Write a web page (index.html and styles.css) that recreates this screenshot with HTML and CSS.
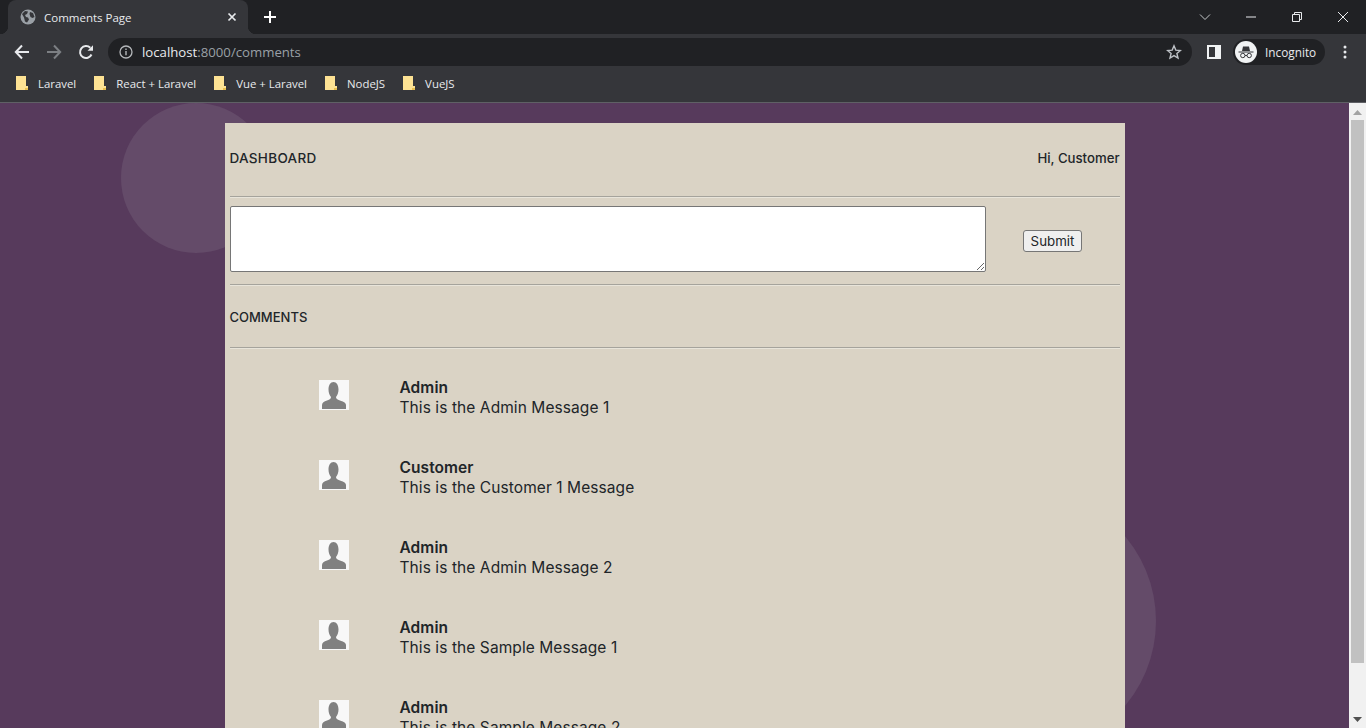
FILE: index.html
```html
<!DOCTYPE html>
<html>
	<head>
		<meta charset="utf-8">
		<title>Comments Page</title>
		<link rel="stylesheet" href="styles.css">
	</head>
	<body>
		<div class="chrome">
			<div class="tabstrip">
				<div class="tab">
					<svg class="globe" width="16" height="16" viewBox="0 0 16 16"><circle cx="8" cy="8" r="7.500" fill="#9aa0a6"/><path d="M2 5l3-3 3 .5-1 2.500-2 1 1 2 2 .5 1 2-2 3-2-1-1-4zM10 3l3 1 1.500 4-2 1-2-1-1-3z" fill="#35363a"/></svg>
					<span class="tab-title">Comments Page</span>
					<svg class="tab-close" width="10" height="10" viewBox="0 0 10 10"><path d="M1.500 1.500l7 7M8.500 1.500l-7 7" stroke="#e8eaed" stroke-width="1.700"/></svg>
				</div>
				<svg class="newtab" width="14" height="14" viewBox="0 0 14 14"><path d="M7 1v12M1 7h12" stroke="#fff" stroke-width="2"/></svg>
				<div class="winbtns">
					<svg class="win-chevron" width="12" height="8" viewBox="0 0 12 8"><path d="M1 1.500l5 5 5-5" fill="none" stroke="#c4c7c9"/></svg>
					<svg class="win-min" width="12" height="2" viewBox="0 0 12 2"><path d="M1 1h10" stroke="#e8eaed"/></svg>
					<svg class="win-max" width="12" height="12" viewBox="0 0 12 12"><path d="M1.500 3.500h7v7h-7zM3.500 3.500v-2h7v7h-2" fill="none" stroke="#e8eaed"/></svg>
					<svg class="win-x" width="12" height="12" viewBox="0 0 12 12"><path d="M1 1l10 10M11 1L1 11" stroke="#e8eaed"/></svg>
				</div>
			</div>
			<div class="toolbar">
				<svg class="nav-icon" width="16" height="16" viewBox="0 0 16 16"><path d="M15 8H2M8 1.500L1.800 8 8 14.500" fill="none" stroke="#e8eaed" stroke-width="2"/></svg>
				<svg class="nav-icon" width="16" height="16" viewBox="0 0 16 16"><path d="M1 8h13M8 1.500L14.200 8 8 14.500" fill="none" stroke="#7c7f83" stroke-width="2"/></svg>
				<svg class="nav-icon" width="16" height="16" viewBox="0 0 16 16"><path d="M13.500 10.500A6 6 0 1 1 12.300 3.800" fill="none" stroke="#e8eaed" stroke-width="2"/><path d="M9.500 6.800H15V1.300z" fill="#e8eaed"/></svg>
				<div class="omnibox">
					<svg width="14" height="14" viewBox="0 0 14 14"><circle cx="7" cy="7" r="6" fill="none" stroke="#b5b8bb" stroke-width="1.300"/><path d="M7 6v4.200M7 3.600v1.400" stroke="#b5b8bb" stroke-width="1.400"/></svg>
					<span class="url"><span class="url-host">localhost</span>:8000/comments</span>
					<svg class="star" width="16" height="16" viewBox="0 0 16 16"><path d="M8 1.800l1.800 4.300 4.600.4-3.500 3 1.100 4.500L8 11.600 4 14l1.100-4.500-3.500-3 4.600-.4z" fill="none" stroke="#bdc1c6" stroke-width="1.400"/></svg>
				</div>
				<svg class="sidepanel" width="14" height="14" viewBox="0 0 14 14"><path d="M0 0h14v14H0z" fill="#f1f3f4"/><path d="M2 2h6v10H2z" fill="#35363a"/></svg>
				<div class="profile">
					<svg width="22" height="22" viewBox="0 0 22 22"><circle cx="11" cy="11" r="11" fill="#f1f3f4"/><path d="M3.500 10.500h15v1h-15zM7 10l1-4.500h6l1 4.500z" fill="#35363a"/><circle cx="7.800" cy="14.500" r="2.200" fill="none" stroke="#35363a"/><circle cx="14.200" cy="14.500" r="2.200" fill="none" stroke="#35363a"/><path d="M10 14.500h2" stroke="#35363a"/></svg>
					<span>Incognito</span>
				</div>
				<svg class="kebab" width="4" height="14" viewBox="0 0 4 14"><circle cx="2" cy="2" r="1.500" fill="#e8eaed"/><circle cx="2" cy="7" r="1.500" fill="#e8eaed"/><circle cx="2" cy="12" r="1.500" fill="#e8eaed"/></svg>
			</div>
			<div class="bookmarks">
				<div class="bookmark"><svg width="12" height="14" viewBox="0 0 12 14"><path d="M0 0h10v10h2v4H0z" fill="#fde293"/><path d="M9 12h3v2H9z" fill="#e9c04f"/></svg>Laravel</div>
				<div class="bookmark"><svg width="12" height="14" viewBox="0 0 12 14"><path d="M0 0h10v10h2v4H0z" fill="#fde293"/><path d="M9 12h3v2H9z" fill="#e9c04f"/></svg>React + Laravel</div>
				<div class="bookmark"><svg width="12" height="14" viewBox="0 0 12 14"><path d="M0 0h10v10h2v4H0z" fill="#fde293"/><path d="M9 12h3v2H9z" fill="#e9c04f"/></svg>Vue + Laravel</div>
				<div class="bookmark"><svg width="12" height="14" viewBox="0 0 12 14"><path d="M0 0h10v10h2v4H0z" fill="#fde293"/><path d="M9 12h3v2H9z" fill="#e9c04f"/></svg>NodeJS</div>
				<div class="bookmark"><svg width="12" height="14" viewBox="0 0 12 14"><path d="M0 0h10v10h2v4H0z" fill="#fde293"/><path d="M9 12h3v2H9z" fill="#e9c04f"/></svg>VueJS</div>
			</div>
		</div>
		<div class="viewport">
			<div class="page">
				<div class="circle circle1"></div>
				<div class="circle circle2"></div>
				<div class="card">
					<div class="card-head">
						<span class="head-title">DASHBOARD</span>
						<span class="head-user">Hi, Customer</span>
					</div>
					<hr>
					<div class="comment-form">
						<textarea class="comment-box"></textarea>
						<div class="submit-wrap"><button class="submit-btn">Submit</button></div>
					</div>
					<hr>
					<div class="section-title">COMMENTS</div>
					<hr>
					<div class="comments">
						<div class="comment">
							<svg class="avatar" viewBox="0 0 30 30"><path d="M0 0h30v30H0z" fill="#f8f8f8"/><path d="M3 29v-4c0-2.500 2-3.500 5-4.500 3-1 4-2 4-3.500-1.500-2-2.500-4-2.500-7.500C9.500 5 11.500 2 14.500 2s5 3 5 7.500c0 3.500-1 5.500-2.500 7.500 0 1.500 1 2.500 4 3.500 3 1 6 2 6 4.500v4z" fill="#808080"/></svg>
							<div class="comment-text"><div class="comment-name">Admin</div><div>This is the Admin Message 1</div></div>
						</div>
						<div class="comment">
							<svg class="avatar" viewBox="0 0 30 30"><path d="M0 0h30v30H0z" fill="#f8f8f8"/><path d="M3 29v-4c0-2.500 2-3.500 5-4.500 3-1 4-2 4-3.500-1.500-2-2.500-4-2.500-7.500C9.500 5 11.500 2 14.500 2s5 3 5 7.500c0 3.500-1 5.500-2.500 7.500 0 1.500 1 2.500 4 3.500 3 1 6 2 6 4.500v4z" fill="#808080"/></svg>
							<div class="comment-text"><div class="comment-name">Customer</div><div>This is the Customer 1 Message</div></div>
						</div>
						<div class="comment">
							<svg class="avatar" viewBox="0 0 30 30"><path d="M0 0h30v30H0z" fill="#f8f8f8"/><path d="M3 29v-4c0-2.500 2-3.500 5-4.500 3-1 4-2 4-3.500-1.500-2-2.500-4-2.500-7.500C9.500 5 11.500 2 14.500 2s5 3 5 7.500c0 3.500-1 5.500-2.500 7.500 0 1.500 1 2.500 4 3.500 3 1 6 2 6 4.500v4z" fill="#808080"/></svg>
							<div class="comment-text"><div class="comment-name">Admin</div><div>This is the Admin Message 2</div></div>
						</div>
						<div class="comment">
							<svg class="avatar" viewBox="0 0 30 30"><path d="M0 0h30v30H0z" fill="#f8f8f8"/><path d="M3 29v-4c0-2.500 2-3.500 5-4.500 3-1 4-2 4-3.500-1.500-2-2.500-4-2.500-7.500C9.500 5 11.500 2 14.500 2s5 3 5 7.500c0 3.500-1 5.500-2.500 7.500 0 1.500 1 2.500 4 3.500 3 1 6 2 6 4.500v4z" fill="#808080"/></svg>
							<div class="comment-text"><div class="comment-name">Admin</div><div>This is the Sample Message 1</div></div>
						</div>
						<div class="comment">
							<svg class="avatar" viewBox="0 0 30 30"><path d="M0 0h30v30H0z" fill="#f8f8f8"/><path d="M3 29v-4c0-2.500 2-3.500 5-4.500 3-1 4-2 4-3.500-1.500-2-2.500-4-2.500-7.500C9.500 5 11.500 2 14.500 2s5 3 5 7.500c0 3.500-1 5.500-2.500 7.500 0 1.500 1 2.500 4 3.500 3 1 6 2 6 4.500v4z" fill="#808080"/></svg>
							<div class="comment-text"><div class="comment-name">Admin</div><div>This is the Sample Message 2</div></div>
						</div>
					</div>
				</div>
			</div>
			<div class="scrollbar">
				<svg class="scroll-up" width="9" height="5" viewBox="0 0 9 5"><path d="M4.500 0L9 5H0z" fill="#a3a3a3"/></svg>
				<div class="scroll-thumb"></div>
				<svg class="scroll-down" width="9" height="5" viewBox="0 0 9 5"><path d="M0 0h9L4.500 5z" fill="#505050"/></svg>
			</div>
		</div>
	</body>
</html>
```
FILE: styles.css
```css
*{
	margin:0;
	padding:0;
	box-sizing:border-box;
}
html,body{
	height:100%;
	overflow:hidden;
}
body{
	display:flex;
	flex-direction:column;
	font-family:"Open Sans","Liberation Sans",sans-serif;
}
.chrome{
	flex:none;
	height:103px;
	background:#35363a;
	border-bottom:1px solid #5f6065;
	color:#e8eaed;
}
.tabstrip{
	display:flex;
	align-items:center;
	height:34px;
	background:#202124;
	padding-left:8px;
}
.tab{
	position:relative;
	display:flex;
	align-items:center;
	width:240px;
	height:34px;
	padding:0 11px 0 12px;
	background:#35363a;
	border-radius:8px 8px 0 0;
}
.tab:before,.tab:after{
	content:"";
	position:absolute;
	bottom:0;
	width:8px;
	height:8px;
}
.tab:before{
	left:-8px;
	background:radial-gradient(circle at 0 0,#202124 8px,#35363a 8.500px);
}
.tab:after{
	right:-8px;
	background:radial-gradient(circle at 100% 0,#202124 8px,#35363a 8.500px);
}
.tab-title{
	flex:1;
	margin-left:8px;
	font-size:11.500px;
}
.newtab{
	margin-left:15px;
}
.winbtns{
	display:flex;
	align-items:center;
	margin-left:auto;
	padding-right:17px;
}
.win-chevron,.win-min,.win-max{
	margin-right:34px;
}
.toolbar{
	display:flex;
	align-items:center;
	height:36px;
	padding-left:14px;
}
.nav-icon{
	margin-right:16px;
}
.omnibox{
	display:flex;
	align-items:center;
	width:1084px;
	height:28px;
	margin-left:-2px;
	padding:0 10px 0 11px;
	background:#202124;
	border-radius:14px;
}
.url{
	flex:1;
	margin-left:9px;
	font-size:13.200px;
	color:#9aa0a6;
}
.url-host{
	color:#e8eaed;
}
.sidepanel{
	margin-left:15px;
}
.profile{
	display:flex;
	align-items:center;
	gap:8px;
	width:92px;
	height:26px;
	margin-left:12px;
	padding-left:2px;
	background:#202124;
	border-radius:13px;
	font-size:11.800px;
}
.kebab{
	margin-left:18px;
}
.bookmarks{
	display:flex;
	align-items:center;
	height:32px;
	padding:0 0 6px 16px;
}
.bookmark{
	display:flex;
	align-items:center;
	gap:10px;
	margin-right:18px;
	font-size:11.400px;
}
.viewport{
	flex:1;
	display:flex;
	min-height:0;
}
.page{
	position:relative;
	flex:1;
	overflow:hidden;
	background:#573a5c;
	padding-top:20px;
}
.circle{
	position:absolute;
	border-radius:50%;
	background:#644b69;
}
.circle1{
	left:121px;
	top:0;
	width:150px;
	height:150px;
}
.circle2{
	left:892px;
	top:386px;
	width:264px;
	height:264px;
}
.card{
	position:relative;
	width:900px;
	margin:0 auto;
	padding:0 5px;
	background:#dad3c5;
	font-family:Inter,sans-serif;
	color:#212529;
}
.card-head{
	display:flex;
	justify-content:space-between;
	align-items:center;
	height:73px;
	padding-bottom:3px;
	font-weight:500;
}
.head-title{
	font-size:13.500px;
	letter-spacing:.3px;
}
.head-user{
	font-size:13.200px;
}
hr{
	border:none;
	border-top:1px solid #a5a39c;
	border-bottom:1px solid #e8e4da;
}
.comment-form{
	display:flex;
	padding:8px 0 12px;
}
.comment-box{
	width:756px;
	height:66px;
	background:#fff;
	border:1px solid #767676;
	border-radius:2px;
}
.submit-wrap{
	flex:1;
	display:flex;
	align-items:center;
	justify-content:center;
	padding-top:4px;
}
.submit-btn{
	width:59px;
	height:22px;
	background:#efefef;
	border:1px solid #767676;
	border-radius:3px;
	font-family:Inter,sans-serif;
	font-size:13.300px;
	color:#212529;
}
.section-title{
	display:flex;
	align-items:center;
	height:61px;
	font-size:13px;
	font-weight:500;
}
.comments{
	padding:31px 0 0 89px;
}
.comment{
	display:flex;
	height:80px;
	font-size:15.500px;
	letter-spacing:.08px;
}
.avatar{
	flex:none;
	width:30px;
	height:30px;
}
.comment-text{
	margin-left:51px;
	margin-top:-2px;
	line-height:20px;
}
.comment-name{
	font-weight:600;
}
.scrollbar{
	flex:none;
	display:flex;
	flex-direction:column;
	align-items:center;
	width:17px;
	background:#f1f1f1;
}
.scroll-up{
	flex:none;
	margin:7px 0 5px;
}
.scroll-thumb{
	flex:none;
	width:13px;
	height:543px;
	background:#c1c1c1;
}
.scroll-down{
	flex:none;
	margin:auto 0 6px;
}
```
